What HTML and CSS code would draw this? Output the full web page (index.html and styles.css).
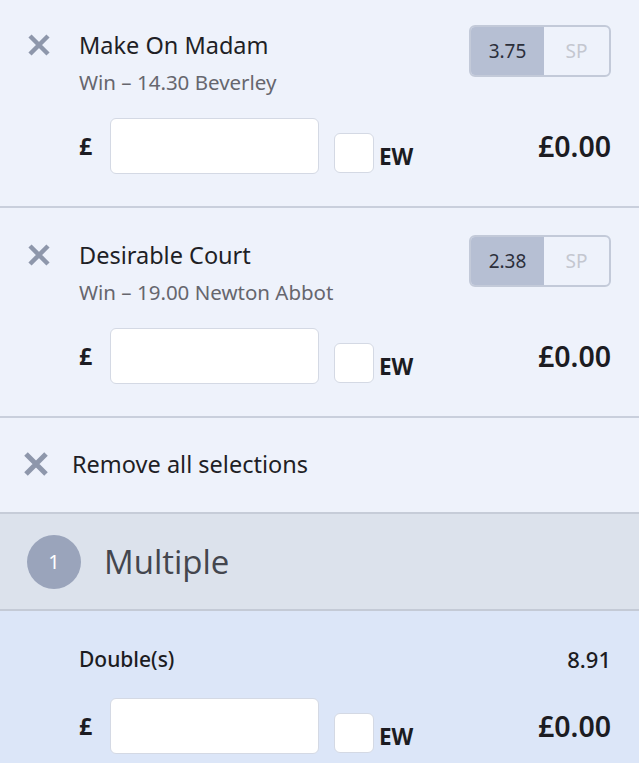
FILE: index.html
```html
<!DOCTYPE html>
<html lang="en">
<head>
    <meta charset="UTF-8">
    <meta name="viewport" content="width=device-width, initial-scale=1.0">
    <title>Bet Slip</title>
    <link rel="stylesheet" href="styles.css">
</head>
<body>
<div class="slip">
    <!-- одиночная ставка -->
    <div class="selection">
        <div class="sel-head">
            <span class="remove">
                <svg width="24" height="24" viewBox="0 0 24 24"><path d="M3 3 L21 21 M21 3 L3 21" stroke="#8e97ab" stroke-width="4.5"/></svg>
            </span>
            <div class="sel-info">
                <div class="sel-name">Make On Madam</div>
                <div class="sel-market">Win – 14.30 Beverley</div>
            </div>
            <div class="odds">
                <span class="odds-price">3.75</span>
                <span class="odds-sp">SP</span>
            </div>
        </div>
        <div class="stake-row">
            <span class="pound">£</span>
            <div class="stake-input"></div>
            <div class="ew"><span class="ew-box"></span><span class="ew-label">EW</span></div>
            <span class="returns">£0.00</span>
        </div>
    </div>

    <div class="selection">
        <div class="sel-head">
            <span class="remove">
                <svg width="24" height="24" viewBox="0 0 24 24"><path d="M3 3 L21 21 M21 3 L3 21" stroke="#8e97ab" stroke-width="4.5"/></svg>
            </span>
            <div class="sel-info">
                <div class="sel-name">Desirable Court</div>
                <div class="sel-market">Win – 19.00 Newton Abbot</div>
            </div>
            <div class="odds">
                <span class="odds-price">2.38</span>
                <span class="odds-sp">SP</span>
            </div>
        </div>
        <div class="stake-row">
            <span class="pound">£</span>
            <div class="stake-input"></div>
            <div class="ew"><span class="ew-box"></span><span class="ew-label">EW</span></div>
            <span class="returns">£0.00</span>
        </div>
    </div>

    <div class="remove-all">
        <svg width="26" height="26" viewBox="0 0 26 26"><path d="M3 3 L23 23 M23 3 L3 23" stroke="#8e97ab" stroke-width="5"/></svg>
        <span>Remove all selections</span>
    </div>

    <div class="multi-head">
        <span class="count">1</span>
        <span class="multi-title">Multiple</span>
    </div>

    <div class="multi">
        <div class="multi-line">
            <span class="multi-name">Double(s)</span>
            <span class="multi-odds">8.91</span>
        </div>
        <div class="stake-row">
            <span class="pound">£</span>
            <div class="stake-input"></div>
            <div class="ew"><span class="ew-box"></span><span class="ew-label">EW</span></div>
            <span class="returns">£0.00</span>
        </div>
    </div>
</div>
</body>
</html>
```

FILE: styles.css
```css
body {
    margin: 0;
    background: #eef2fb;
    font-family: "Noto Sans", "Open Sans", sans-serif;
    color: #1c1c22;
    overflow: hidden;
}
.slip {
    width: 639px;
    margin-top: -2px;
}
.selection {
    height: 210px;
    box-sizing: border-box;
    border-bottom: 2px solid #c9cfdc;
    padding: 27px 28px 0 27px;
}
.sel-head {
    display: flex;
    align-items: flex-start;
}
.remove {
    width: 52px;
    padding-top: 8px;
}
.remove svg {
    display: block;
}
.sel-info {
    flex: 1;
}
.sel-name {
    font-size: 23.5px;
    line-height: 30px;
    margin-top: 5px;
    color: #1f1f26;
}
.sel-market {
    font-size: 20.5px;
    line-height: 26px;
    margin-top: 9px;
    color: #66666e;
}
.odds {
    display: flex;
    width: 142px;
    height: 52px;
    box-sizing: border-box;
    border: 2px solid #c3cad9;
    border-radius: 6px;
    overflow: hidden;
    font-size: 19px;
}
.odds-price {
    width: 73px;
    background: #b6bfd3;
    display: flex;
    align-items: center;
    justify-content: center;
    color: #2c2f3b;
}
.odds-sp {
    flex: 1;
    display: flex;
    align-items: center;
    justify-content: center;
    color: #c4c7d0;
}
.stake-row {
    display: flex;
    align-items: center;
    height: 56px;
    margin-top: 23px;
    padding-left: 52px;
}
.pound {
    width: 31px;
    font-size: 23px;
    font-weight: 700;
}
.stake-input {
    width: 209px;
    height: 56px;
    box-sizing: border-box;
    background: #fff;
    border: 1px solid #d4d9e4;
    border-radius: 6px;
}
.ew {
    align-self: flex-end;
    display: flex;
    align-items: center;
    margin-left: 15px;
    margin-bottom: 1px;
}
.ew-box {
    width: 40px;
    height: 40px;
    box-sizing: border-box;
    background: #fff;
    border: 1px solid #d4d9e4;
    border-radius: 6px;
}
.ew-label {
    font-size: 22.5px;
    font-weight: 700;
    margin-left: 5px;
    margin-top: 6px;
}
.returns {
    margin-left: auto;
    font-size: 28.5px;
    font-weight: 600;
}
.remove-all {
    height: 96px;
    box-sizing: border-box;
    border-bottom: 2px solid #c6ccd8;
    display: flex;
    align-items: center;
    padding-left: 23px;
    padding-bottom: 2px;
    font-size: 23.5px;
    color: #1f1f26;
}
.remove-all svg {
    margin-right: 23px;
}
.multi-head {
    height: 97px;
    box-sizing: border-box;
    background: #dce2ec;
    border-bottom: 2px solid #c4cad6;
    display: flex;
    align-items: center;
    padding-left: 27px;
}
.count {
    width: 54px;
    height: 54px;
    border-radius: 50%;
    background: #9aa4bb;
    color: #fff;
    display: flex;
    align-items: center;
    justify-content: center;
    font-size: 20px;
}
.multi-title {
    margin-left: 23px;
    font-family: "Open Sans", sans-serif;
    font-size: 33px;
    color: #44464e;
}
.multi {
    background: #dce6f8;
    height: 160px;
    padding: 34px 28px 0 28px;
}
.multi-line {
    display: flex;
    justify-content: space-between;
    padding-left: 51px;
    font-size: 21px;
    line-height: 29px;
    font-weight: 500;
}
.multi-odds {
    font-size: 22px;
}
.multi .stake-row {
    margin-top: 24px;
    padding-left: 51px;
}
```
